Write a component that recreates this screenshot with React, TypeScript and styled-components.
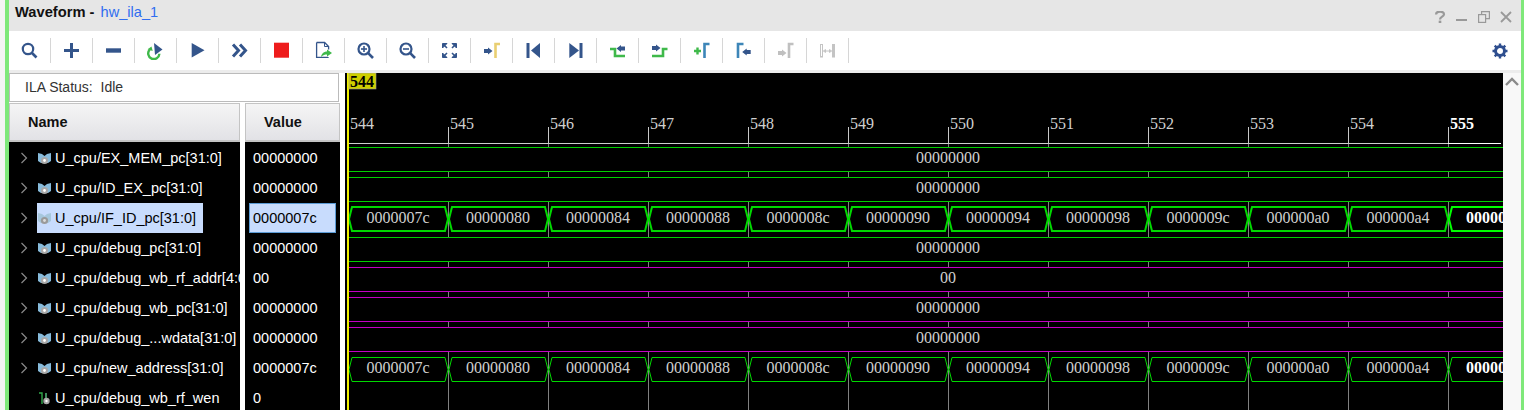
import React from 'react';
import styled, { createGlobalStyle } from 'styled-components';

const Global = createGlobalStyle`
  html, body { margin: 0; padding: 0; background: #f4f4f4; overflow: hidden; }
  #root { width: 1524px; height: 410px; }
`;
const Page = styled.div`
  width: 1524px; height: 410px; box-sizing: border-box; padding-left: 5px;
  background: #f4f4f4; font-family: "Liberation Sans", Arial, sans-serif; font-size: 14.5px; overflow: hidden;
`;
const Frame = styled.div`
  height: 410px; box-sizing: border-box; border-left: 4px solid #7fe87a; border-right: 3px solid #7fe87a;
  display: flex; flex-direction: column; background: #fff;
`;
const TitleBar = styled.div`
  height: 31px; flex: none; background: #e6e6e6; display: flex; align-items: flex-start; padding: 4px 0 0 6px; box-sizing: border-box;
`;
const Title = styled.span`
  font-weight: 700; font-size: 14.7px; color: #111; line-height: 16px; white-space: pre;
`;
const TitleLink = styled.span`
  color: #2f6df0; font-size: 14.6px; line-height: 16px; margin-left: 2px;
`;
const WindowControls = styled.div`
  margin-left: auto; margin-top: 7px; display: flex; align-items: flex-start; gap: 10px; padding-right: 9px;
`;
const Toolbar = styled.div`
  height: 39px; flex: none; display: flex; align-items: flex-start; background: #fff; border-bottom: 3px solid #ececec; box-sizing: content-box;
`;
const ToolButton = styled.div`
  width: 41px; height: 39px; box-sizing: border-box; flex: none; padding: 9px 0 0 10px;
`;
const Separator = styled.div`
  width: 1px; flex: none; height: 25px; background: #d6d6d6; margin-top: 7px;
`;
const GearSlot = styled.div`
  margin-left: auto; padding: 12px 13px 0 0; display: flex;
`;
const Body = styled.div`
  flex: 1; min-height: 0; display: flex;
`;
const Signals = styled.div`
  width: 331px; flex: none; display: flex; flex-direction: column;
`;
const StatusBox = styled.div`
  width: 330px; height: 29px; flex: none; box-sizing: border-box; border: 1px solid #bbb; background: #fff; color: #333;
  padding-left: 15px; font-size: 14px; line-height: 27px; white-space: pre; margin-bottom: 1px;
`;
const Columns = styled.div`
  flex: 1; min-height: 0; display: grid; grid-template-columns: 231px 95px; column-gap: 5px; grid-template-rows: 39px 1fr;
`;
const HeaderCell = styled.div<{ $indent: number }>`
  box-sizing: border-box; border: 1px solid #c4c4c4; border-bottom-width: 2px;
  background: linear-gradient(#f5f5f5, #e2e2e6); font-weight: 700; color: #111; line-height: 36px; padding-left: ${p => p.$indent}px;
`;
const ListColumn = styled.div`
  background: #000; overflow: hidden; display: flex; flex-direction: column; padding-top: 1px;
`;
const NameRow = styled.div`
  height: 30px; flex: none; display: flex; align-items: center; padding-left: 11px;
`;
const Chevron = styled.div`
  width: 17px; flex: none; display: flex; align-items: center;
`;
const NameLabel = styled.div<{ $selected?: boolean }>`
  display: flex; align-items: center; height: 30px; gap: 4px; padding-left: 1px; padding-right: 7px; white-space: nowrap;
  color: ${p => (p.$selected ? '#000' : '#fff')}; background: ${p => (p.$selected ? '#c8dcfd' : 'transparent')};
`;
const ValueRow = styled.div<{ $selected?: boolean }>`
  height: 30px; box-sizing: border-box; flex: none; margin-left: 4px; width: 87px; padding-left: 3px; line-height: 28px;
  border: 1px solid ${p => (p.$selected ? '#5b9bd5' : 'transparent')};
  color: ${p => (p.$selected ? '#000' : '#fff')}; background: ${p => (p.$selected ? '#c8dcfd' : 'transparent')};
`;
const Gap = styled.div`
  width: 5px; flex: none; background: #fff;
`;
const WavePanel = styled.svg`
  width: 1158px; height: 337px; flex: none; display: block; background: #000;
  font-family: "Liberation Serif", "DejaVu Serif", serif; font-size: 16px;
`;
const Scrollbar = styled.div`
  flex: 1; background: #f8f8f8; display: flex; justify-content: center; padding-top: 4px; align-items: flex-start;
`;

const BLUE = '#34558b';
const GREEN = '#3fb94a';
const Ico = ({ children }: { children: React.ReactNode }) => (
  <svg width="20" height="20" viewBox="0 0 20 20" fill="none" style={{ display: 'block' }}>{children}</svg>
);
const Glass = ({ mark }: { mark?: 'plus' | 'minus' }) => (
  <Ico>
    <circle cx={mark ? 9 : 9} cy={mark ? 9 : 9} r={mark ? 5.5 : 5.2} stroke={BLUE} strokeWidth="2.2" />
    <path d={mark ? 'M13.2 13.2L18 18' : 'M13 13L17.5 17.5'} stroke={BLUE} strokeWidth="2.6" />
    {mark && <path d="M6 9h6" stroke={BLUE} strokeWidth="1.6" />}
    {mark === 'plus' && <path d="M9 6v6" stroke={BLUE} strokeWidth="1.6" />}
  </Ico>
);
const ArrowR = ({ x, y, c }: { x: number; y: number; c: string }) => (
  <path d={`M${x} ${y - 2}h4v-1.5l4.5 3.5-4.5 3.5v-1.5h-4z`} fill={c} />
);
const ArrowL = ({ x, y, c }: { x: number; y: number; c: string }) => (
  <path d={`M${x} ${y - 2}h-4v-1.5l-4.5 3.5 4.5 3.5v-1.5h4z`} fill={c} />
);

const toolIcons: React.ReactNode[] = [
  <Glass />,
  <Ico><path d="M3 10.5h15M10.5 3v15" stroke={BLUE} strokeWidth="3" /></Ico>,
  <Ico><path d="M3 10.5h15" stroke={BLUE} strokeWidth="4.4" /></Ico>,
  <Ico>
    <path d="M9 3l8.5 6.5L10 15z" fill={BLUE} />
    <path d="M4.8 9.5a5.6 5.6 0 1 0 9.6 4.2" stroke={GREEN} strokeWidth="2.4" />
    <path d="M2.6 9.2L6.5 6.5l1.2 4.6z" fill={GREEN} />
  </Ico>,
  <Ico><path d="M4.7 3L17.5 10.2 4.7 17.5z" fill={BLUE} /></Ico>,
  <Ico><path d="M4 4.5l5.5 6-5.5 6M11 4.5l5.5 6-5.5 6" stroke={BLUE} strokeWidth="3" /></Ico>,
  <Ico><rect x="3" y="2.7" width="15" height="15" fill="#ee1c1c" /></Ico>,
  <Ico>
    <path d="M3.6 2.5h8l4 4v3M15 17v.4H3.6v-15" stroke={BLUE} strokeWidth="1.3" />
    <path d="M11.5 2.5v4h4" stroke={BLUE} strokeWidth="1" />
    <path d="M8 17c.5-3.2 3-5.4 6-5.4V9.5l5 3.5-5 3.5v-2c-2 0-4 .5-6 2.5z" fill={GREEN} />
  </Ico>,
  <Glass mark="plus" />,
  <Glass mark="minus" />,
  <Ico>
    <path d="M3.5 3.5h4.5L3.5 8zM17.5 3.5H13l4.5 4.5zM3.5 17.5H8l-4.5-4.5zM17.5 17.5H13l4.5-4.5z" fill={BLUE} stroke={BLUE} />
    <path d="M4 4l4 4M17 4l-4 4M4 17l4-4M17 17l-4-4" stroke={BLUE} strokeWidth="1.6" />
  </Ico>,
  <Ico><ArrowR x={3} y={11} c={BLUE} /><path d="M14.5 18V4h4.5" stroke="#e9cf72" strokeWidth="2.6" /></Ico>,
  <Ico><path d="M5 3v15" stroke={BLUE} strokeWidth="3" /><path d="M17 3v15L8 10.5z" fill={BLUE} /></Ico>,
  <Ico><path d="M16 3v15" stroke={BLUE} strokeWidth="3" /><path d="M4.3 3v15L14 10.5z" fill={BLUE} /></Ico>,
  <Ico>
    <path d="M3 9h5v7h10" stroke={GREEN} strokeWidth="2.6" />
    <ArrowL x={18} y={8.5} c={BLUE} />
  </Ico>,
  <Ico>
    <path d="M3 16h11V9h4.5" stroke={GREEN} strokeWidth="2.6" />
    <ArrowR x={3} y={8} c={BLUE} />
  </Ico>,
  <Ico>
    <path d="M3 11h7M6.5 7.5v7" stroke={GREEN} strokeWidth="2.4" />
    <path d="M13.5 18V4h5" stroke="#3d86b8" strokeWidth="2.6" />
  </Ico>,
  <Ico>
    <path d="M5 18V4h5.5" stroke="#3d86b8" strokeWidth="2.6" />
    <ArrowL x={17.7} y={12} c={BLUE} />
  </Ico>,
  <Ico><ArrowR x={3} y={13} c="#c0c0c0" /><path d="M14 18V4h4.5" stroke="#c0c0c0" strokeWidth="2.6" /></Ico>,
  <Ico>
    <rect x="3.5" y="4.5" width="2" height="12.5" stroke="#c4c4c4" />
    <rect x="15" y="4" width="3" height="13.5" fill="#c4c4c4" />
    <path d="M6.5 11h8M6.5 11l2-1.5v3zM14.5 11l-2-1.5v3z" stroke="#c4c4c4" />
  </Ico>,
];

const Gear = () => (
  <svg width="16" height="16" viewBox="0 0 16 16" style={{ display: 'block' }}>
    <circle cx="8" cy="8" r="4.5" fill="none" stroke="#2f4f8f" strokeWidth="3" />
    <path d="M8 .5v3M8 12.5v3M.5 8h3M12.5 8h3M2.7 2.7l2 2M11.3 11.3l2 2M13.3 2.7l-2 2M4.7 11.3l-2 2" stroke="#2f4f8f" strokeWidth="2.4" />
  </svg>
);

const WinIcons = () => (
  <>
    <svg width="12" height="12" viewBox="0 0 12 12" fill="none">
      <path d="M2 3.4C2-.3 10-.3 10 3.2 10 5.6 6 5.6 6 8.4" stroke="#999" strokeWidth="2.2" />
      <rect x="4.7" y="9.6" width="2.6" height="2.4" fill="#999" />
    </svg>
    <svg width="12" height="12" viewBox="0 0 12 12"><rect x="0" y="8" width="11" height="2" fill="#999" /></svg>
    <svg width="12" height="12" viewBox="0 0 12 12" fill="none" stroke="#999" strokeWidth="1.2">
      <rect x="0.6" y="3.6" width="7" height="7.8" />
      <path d="M3.6 3.5V.6h7.8v7H7.8" />
    </svg>
    <svg width="12" height="12" viewBox="0 0 12 12" fill="none" stroke="#999" strokeWidth="1.8">
      <path d="M1 1l10 10M11 1L1 11" />
    </svg>
  </>
);

const RowChevron = () => (
  <svg width="8" height="12" viewBox="0 0 8 12" fill="none"><path d="M1.5 1l5 5-5 5" stroke="#8a8a8a" strokeWidth="1.2" /></svg>
);
const BusIcon = ({ pale }: { pale?: boolean }) => (
  <svg width="13" height="13" viewBox="0 0 13 13" style={{ flex: 'none' }}>
    <path d="M0 1l4 1 2.5 2L9 2l4-1v8l-3 2H3L0 9z" fill={pale ? '#a6c7dc' : '#87bbdb'} />
    <circle cx="6.5" cy="8.5" r="3.6" fill={pale ? '#9a9a9a' : '#a8a8a8'} />
    <circle cx="6.5" cy="8.5" r="1.4" fill={pale ? '#dcdcdc' : '#fff'} />
  </svg>
);
const BitIcon = () => (
  <svg width="13" height="13" viewBox="0 0 13 13" style={{ flex: 'none' }} fill="none">
    <path d="M1 1h3v11" stroke="#2fa84a" strokeWidth="1.4" />
    <path d="M8 1v6" stroke="#3d8b5a" strokeWidth="2" />
    <circle cx="8.5" cy="9" r="3.2" fill="#a8a8a8" />
    <circle cx="8.5" cy="9" r="1.2" fill="#fff" />
  </svg>
);

type Sig = { name: string; value: string; bit?: boolean; selected?: boolean };
const signals: Sig[] = [
  { name: 'U_cpu/EX_MEM_pc[31:0]', value: '00000000' },
  { name: 'U_cpu/ID_EX_pc[31:0]', value: '00000000' },
  { name: 'U_cpu/IF_ID_pc[31:0]', value: '0000007c', selected: true },
  { name: 'U_cpu/debug_pc[31:0]', value: '00000000' },
  { name: 'U_cpu/debug_wb_rf_addr[4:0]', value: '00' },
  { name: 'U_cpu/debug_wb_pc[31:0]', value: '00000000' },
  { name: 'U_cpu/debug_...wdata[31:0]', value: '00000000' },
  { name: 'U_cpu/new_address[31:0]', value: '0000007c' },
  { name: 'U_cpu/debug_wb_rf_wen', value: '0', bit: true },
];

const ticks = [544, 545, 546, 547, 548, 549, 550, 551, 552, 553, 554, 555];
const hexValues = ['0000007c', '00000080', '00000084', '00000088', '0000008c', '00000090', '00000094', '00000098', '0000009c', '000000a0', '000000a4', '000000a8'];
const flatRows = [
  { y: 147, text: '00000000', color: '#00d000' },
  { y: 177, text: '00000000', color: '#00d000' },
  { y: 237, text: '00000000', color: '#00d000' },
  { y: 267, text: '00', color: '#c400c4' },
  { y: 297, text: '00000000', color: '#c400c4' },
  { y: 327, text: '00000000', color: '#c400c4' },
];
const gridRanges = [[143, 147], [171, 177], [201, 237], [261, 267], [291, 297], [321, 327], [351, 410]];

const BusRow = ({ y, width }: { y: number; width: number }) => (
  <g>
    {hexValues.map((v, i) => {
      const x0 = 349 + i * 100;
      const x1 = 448 + i * 100;
      const last = i === hexValues.length - 1;
      const color = last && width > 1 ? '#00ff00' : '#00d800';
      return (
        <g key={v}>
          <path
            d={`M${x0} ${y + 12}L${x0 + 3} ${y}H${x1 - 3}L${x1} ${y + 12}L${x1 - 3} ${y + 24}H${x0 + 3}Z`}
            fill="none" stroke={color} strokeWidth={width}
          />
          <text x={398 + i * 100} y={y + 15.5} textAnchor="middle" fill={last ? '#fff' : '#d0d0d0'} fontWeight={last ? 700 : 400}>{v}</text>
        </g>
      );
    })}
  </g>
);

const Waves = () => (
  <WavePanel viewBox="345 73 1158 337">
    {ticks.slice(1).map((_, i) => {
      const x = 448.5 + i * 100;
      return (
        <g key={x}>
          <path d={`M${x} 127V143`} stroke="#c8c8c8" />
          {gridRanges.map(([a, b]) => (
            <path key={a} d={`M${x} ${a}V${b}`} stroke="#808080" />
          ))}
        </g>
      );
    })}
    {ticks.map((t, i) => (
      <text key={t} x={350 + i * 100} y={129} fill={t === 555 ? '#fff' : '#d0d0d0'} fontWeight={t === 555 ? 700 : 400}>{t}</text>
    ))}
    <path d="M349 143.5H1448" stroke="#cfcfcf" />
    <path d="M1448 143.5H1501" stroke="#fff" />
    {flatRows.map(r => (
      <g key={r.y}>
        <path d={`M349 ${r.y + 0.5}H1503M349 ${r.y + 24.5}H1503`} stroke={r.color} />
        <text x={948} y={r.y + 15.5} textAnchor="middle" fill="#d0d0d0">{r.text}</text>
      </g>
    ))}
    <BusRow y={207} width={2} />
    <BusRow y={357.5} width={1} />
    <rect x="347" y="73" width="2" height="337" fill="#f0f000" />
    <rect x="349" y="73" width="27" height="16" fill="#cfcf00" stroke="#999" strokeWidth="0.6" />
    <text x={350} y={87} fill="#000" fontWeight={700}>544</text>
  </WavePanel>
);

export default function App() {
  return (
    <Page>
      <Global />
      <Frame>
        <TitleBar>
          <Title>Waveform - </Title>
          <TitleLink>hw_ila_1</TitleLink>
          <WindowControls><WinIcons /></WindowControls>
        </TitleBar>
        <Toolbar>
          {toolIcons.map((icon, i) => (
            <React.Fragment key={i}>
              <ToolButton>{icon}</ToolButton>
              <Separator />
            </React.Fragment>
          ))}
          <GearSlot><Gear /></GearSlot>
        </Toolbar>
        <Body>
          <Signals>
            <StatusBox>ILA Status:  Idle</StatusBox>
            <Columns>
              <HeaderCell $indent={18}>Name</HeaderCell>
              <HeaderCell $indent={18}>Value</HeaderCell>
              <ListColumn>
                {signals.map(s => (
                  <NameRow key={s.name}>
                    <Chevron>{!s.bit && <RowChevron />}</Chevron>
                    <NameLabel $selected={s.selected}>
                      {s.bit ? <BitIcon /> : <BusIcon pale={s.selected} />}
                      {s.name}
                    </NameLabel>
                  </NameRow>
                ))}
              </ListColumn>
              <ListColumn>
                {signals.map(s => (
                  <ValueRow key={s.name} $selected={s.selected}>{s.value}</ValueRow>
                ))}
              </ListColumn>
            </Columns>
          </Signals>
          <Gap />
          <Waves />
          <Scrollbar>
            <svg width="14" height="10" viewBox="0 0 14 10" fill="none"><path d="M1 8l6-6 6 6" stroke="#8a8a8a" strokeWidth="2.4" /></svg>
          </Scrollbar>
        </Body>
      </Frame>
    </Page>
  );
}
